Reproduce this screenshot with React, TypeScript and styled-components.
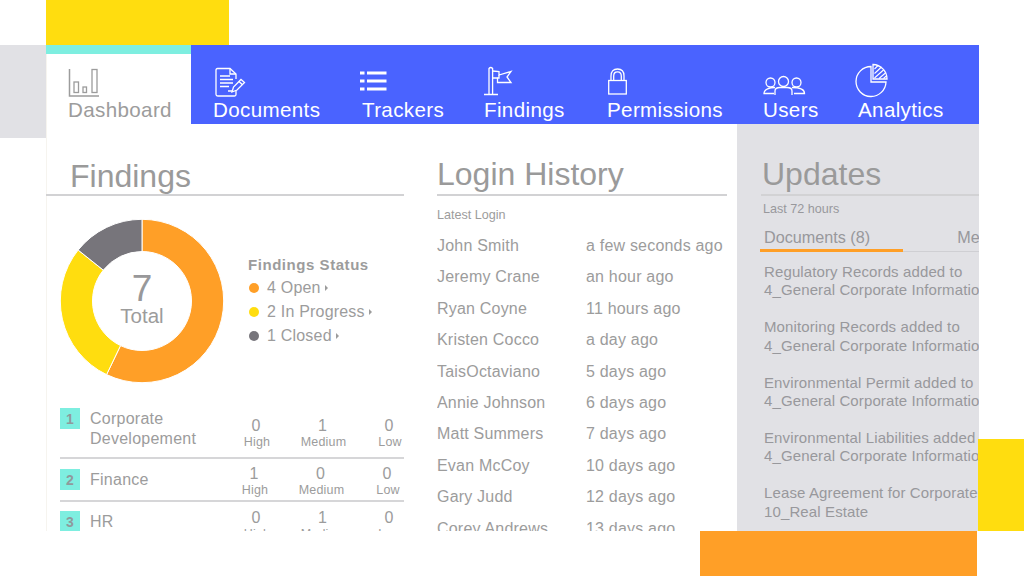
import React from "react";
import styled, { createGlobalStyle } from "styled-components";

const Global = createGlobalStyle`
  html, body { margin: 0; padding: 0; background: #fff; }
  body { font-family: "Liberation Sans", Arial, sans-serif; color: #9c9c9c; overflow: hidden; }
`;

const Page = styled.div`
  width: 1024px; height: 576px; overflow: hidden;
  display: grid; grid-template-columns: 46px 933px 45px; grid-template-rows: 45px 486px 45px;
`;
const TopBlock = styled.div`grid-column: 2; grid-row: 1; width: 183px; background: #ffdd0f;`;
const LeftBlock = styled.div`grid-column: 1; grid-row: 2; height: 93px; background: #e1e1e5;`;
const RightBlock = styled.div`grid-column: 3; grid-row: 2; align-self: end; height: 92px; margin-left: -1px; background: #ffdd0f;`;
const BottomBlock = styled.div`grid-column: 2; grid-row: 3; justify-self: end; width: 277px; margin-right: 2px; background: #ff9f27;`;

const Card = styled.div`
  grid-column: 2; grid-row: 2; display: flex; flex-direction: column; overflow: hidden;
  box-shadow: inset 1px 0 0 #f6f4ef;
`;
const Nav = styled.nav`display: flex; height: 79px; flex: none;`;
const HomeTab = styled.div`
  width: 145px; box-sizing: border-box; border-top: 9px solid #7eeee0; padding: 12px 0 0 22px;
  color: #9c9c9c;
`;
const NavStrip = styled.div`
  flex: 1; background: #4a63ff; color: #fff; display: flex; padding: 21px 0 0 22px;
`;
const Tab = styled.div<{ $w: number }>`display: flex; flex-direction: column; width: ${(p) => p.$w}px; flex: none;`;
const TabIcon = styled.svg<{ $shift?: number }>`
  display: block; height: 32px; margin-left: ${(p) => p.$shift ?? 0}px; flex: none; overflow: visible;
  fill: none; stroke: currentColor; stroke-width: 1.3;
`;
const TabLabel = styled.span`font-size: 20.6px; line-height: 24px; letter-spacing: 0.35px; white-space: nowrap;`;

const Panels = styled.div`flex: 1; min-height: 0; display: grid; grid-template-columns: 391px 300px 242px;`;
const Panel = styled.section<{ $grey?: boolean }>`
  min-width: 0; overflow: hidden; background: ${(p) => (p.$grey ? "#e1e1e5" : "transparent")};
  color: ${(p) => (p.$grey ? "#98989c" : "#9c9c9c")};
`;
const FindingsPanel = styled(Panel)`padding-right: 33px;`;
const LoginPanel = styled(Panel)`padding-right: 10px;`;
const UpdatesPanel = styled(Panel)`padding-left: 24px;`;

const Title = styled.h2<{ $inset?: number; $top?: number }>`
  margin: 0; height: 72px; box-sizing: border-box; border-bottom: 2px solid #d2d2d4;
  padding: ${(p) => p.$top ?? 32}px 0 0 ${(p) => p.$inset ?? 0}px;
  font-size: 32px; line-height: 38px; font-weight: 400; color: #9a9a9a;
`;

const Summary = styled.div`display: flex; align-items: center; padding: 23px 0 0 14px;`;
const DonutWrap = styled.div`position: relative; width: 164px; height: 164px; flex: none;`;
const DonutCenter = styled.div`
  position: absolute; inset: 0; display: flex; flex-direction: column; align-items: center; justify-content: center;
  padding-bottom: 3px; box-sizing: border-box;
`;
const CenterNum = styled.span`font-size: 37px; line-height: 33px; color: #98989a;`;
const CenterLabel = styled.span`font-size: 20.5px; line-height: 22px;`;
const Legend = styled.div`margin: -2px 0 0 24px;`;
const LegendTitle = styled.div`font-size: 15px; font-weight: 700; line-height: 24px; letter-spacing: 0.55px;`;
const LegendRow = styled.div`display: flex; align-items: center; height: 23.6px; font-size: 16px; letter-spacing: 0.2px; white-space: nowrap;`;
const Dot = styled.i<{ $c: string }>`width: 10px; height: 10px; border-radius: 50%; background: ${(p) => p.$c}; margin: 0 8px 0 1px;`;
const Caret = styled.i`
  width: 0; height: 0; margin-left: 4px; border-left: 3px solid #9c9c9c;
  border-top: 3px solid transparent; border-bottom: 3px solid transparent;
`;

const DeptList = styled.div`margin-top: 25px;`;
const Dept = styled.div<{ $h: number; $rule?: boolean }>`
  margin-left: 14px; height: ${(p) => p.$h}px; box-sizing: border-box; display: flex;
  border-bottom: ${(p) => (p.$rule ? "2px solid #d6d6d8" : "none")};
`;
const Badge = styled.span<{ $top: number }>`
  width: 20px; height: 21px; background: #7eeee0; color: #8f9a9c; font-size: 14px; font-weight: 700;
  margin-top: ${(p) => p.$top}px;
  display: flex; align-items: center; justify-content: center; flex: none;
`;
const DeptName = styled.div<{ $top: number }>`
  margin-left: 10px; padding-top: ${(p) => p.$top}px; font-size: 16px; line-height: 20px; letter-spacing: 0.25px; flex: 1; white-space: nowrap;
`;
const Metrics = styled.div<{ $shift: number; $top: number }>`
  display: flex; gap: 16.5px; margin-right: ${(p) => p.$shift}px; padding-top: ${(p) => p.$top}px;
`;
const Metric = styled.div`width: 50px; text-align: center;`;
const MetricValue = styled.div`font-size: 16px; line-height: 19px; letter-spacing: 0.2px;`;
const MetricLabel = styled.div`font-size: 12.5px; line-height: 14px; letter-spacing: 0.2px; margin-left: 2px;`;

const Small = styled.div<{ $top: number; $left?: number }>`
  font-size: 12.6px; line-height: 16px; padding: ${(p) => p.$top}px 0 0 ${(p) => p.$left ?? 0}px;
`;
const People = styled.div`padding-top: 7px;`;
const Person = styled.div`display: grid; grid-template-columns: 149px 1fr; height: 31.4px; line-height: 31.4px; font-size: 16px; letter-spacing: 0.2px; white-space: nowrap;`;

const UpdateTabs = styled.div`
  display: flex; gap: 87px; margin-top: 9px; height: 26px; position: relative; box-sizing: border-box;
  border-bottom: 1px solid #cfcfd3; font-size: 16.2px; line-height: 22px; padding-left: 3px; white-space: nowrap;
`;
const ActiveLine = styled.i`
  position: absolute; left: -1px; bottom: -1px; width: 143px; height: 3px; background: #ff9f27;
`;
const UpdateList = styled.div`padding: 11px 0 0 3px;`;
const Update = styled.div`
  height: 55.3px; font-size: 15px; line-height: 18.4px; letter-spacing: 0.12px; white-space: nowrap;
`;

function polar(r: number, deg: number) {
  const a = ((deg - 90) * Math.PI) / 180;
  return `${(82 + r * Math.cos(a)).toFixed(2)} ${(82 + r * Math.sin(a)).toFixed(2)}`;
}
function wedge(a: number, b: number) {
  const large = b - a > 180 ? 1 : 0;
  return `M${polar(81.7, a)}A81.7 81.7 0 ${large} 1 ${polar(81.7, b)}L${polar(49.5, b)}A49.5 49.5 0 ${large} 0 ${polar(49.5, a)}Z`;
}

const people: [string, string][] = [
  ["John Smith", "a few seconds ago"], ["Jeremy Crane", "an hour ago"], ["Ryan Coyne", "11 hours ago"],
  ["Kristen Cocco", "a day ago"], ["TaisOctaviano", "5 days ago"], ["Annie Johnson", "6 days ago"],
  ["Matt Summers", "7 days ago"], ["Evan McCoy", "10 days ago"], ["Gary Judd", "12 days ago"],
  ["Corey Andrews", "13 days ago"],
];
const updates: [string, string][] = [
  ["Regulatory Records added to", "4_General Corporate Information"],
  ["Monitoring Records added to", "4_General Corporate Information"],
  ["Environmental Permit added to", "4_General Corporate Information"],
  ["Environmental Liabilities added to", "4_General Corporate Information"],
  ["Lease Agreement for Corporate Office", "10_Real Estate"],
];

const MetricSet = ({ v, shift, top }: { v: number[]; shift: number; top: number }) => (
  <Metrics $shift={shift} $top={top}>
    {["High", "Medium", "Low"].map((l, i) => (
      <Metric key={l}>
        <MetricValue>{v[i]}</MetricValue>
        <MetricLabel>{l}</MetricLabel>
      </Metric>
    ))}
  </Metrics>
);

export default function App() {
  return (
    <Page>
      <Global />
      <TopBlock />
      <LeftBlock />
      <Card>
        <Nav>
          <HomeTab>
            <TabIcon width="32" viewBox="0 0 32 32">
              <path d="M1.5 3V30H31" strokeWidth="1.5" />
              <rect x="6" y="16" width="4.5" height="10.5" />
              <rect x="15" y="21" width="3.5" height="5.5" />
              <rect x="24" y="3.5" width="5" height="23" />
            </TabIcon>
            <TabLabel>Dashboard</TabLabel>
          </HomeTab>
          <NavStrip>
            <Tab $w={149}>
              <TabIcon width="32" viewBox="0 0 32 32" $shift={2}>
                <path d="M21 23V28.5Q21 30 19.5 30H3Q1 30 1 28V4Q1 2.5 2.5 2.5H15L21 8V13" />
                <path d="M15 2.5V8H21" />
                <path d="M5 10H15M5 13.5H18M5 17H18M5 20.5H14M13 25H18" />
                <path d="M17 26L18.5 21L26 13.5L29.5 16.5L22 24Z" fill="#4a63ff" />
                <path d="M24 15.5L27.5 18.8" />
              </TabIcon>
              <TabLabel>Documents</TabLabel>
            </Tab>
            <Tab $w={122}>
              <TabIcon width="30" viewBox="0 0 30 32" $shift={-2}>
                <path d="M0 7H4.5M7 7H26.5M0 15H4.5M7 15H26.5M0 23H4.5M7 23H26.5" strokeWidth="3" />
              </TabIcon>
              <TabLabel>Trackers</TabLabel>
            </Tab>
            <Tab $w={123}>
              <TabIcon width="30" viewBox="0 0 30 32">
                <path d="M5 28V2.5Q6.8 .5 8.6 2.5V28M0 28.5H14" />
                <path d="M8.6 5L15 5.5V9L27 5.5L23 11L27 16.5H13.5V12H8.6" />
                <path d="M15 9V12H13.5" />
              </TabIcon>
              <TabLabel>Findings</TabLabel>
            </Tab>
            <Tab $w={156}>
              <TabIcon width="24" viewBox="0 0 24 32" $shift={1}>
                <rect x=".7" y="14.5" width="17.6" height="13.5" />
                <path d="M3 14.5V10C3 5.5 5.5 3 9.5 3S16 5.5 16 10V14.5M5.7 14.5V10C5.7 7 7 5.8 9.5 5.8S13.3 7 13.3 10V14.5" />
              </TabIcon>
              <TabLabel>Permissions</TabLabel>
            </Tab>
            <Tab $w={95}>
              <TabIcon width="44" viewBox="0 0 44 32">
                <circle cx="7.5" cy="16.5" r="4.5" />
                <circle cx="20.5" cy="15.5" r="5" />
                <circle cx="33.5" cy="16.5" r="4.5" />
                <path d="M12 21.5C7 21.5 1 23 1 27.5H11" />
                <path d="M29 21.5C36 21.5 41.5 23 41.5 27.5H31" />
                <path d="M12 29V25Q12 21.5 17 21.5H24Q29 21.5 29 25V29" />
              </TabIcon>
              <TabLabel>Users</TabLabel>
            </Tab>
            <Tab $w={100}>
              <TabIcon width="36" viewBox="0 0 36 32" $shift={-2}>
                <path d="M15 .5A15 15 0 1 0 30 16H15Z" />
                <path d="M17 -1.5A14.5 14.5 0 0 1 31 13H17Z" />
                <path d="M18.5 3L22 -.5M18.5 7.5L25.5 1M18.5 12L28 3.5M23 12.5L30 6.5M27.5 12.5L30.8 9.5" strokeWidth="1.1" />
              </TabIcon>
              <TabLabel>Analytics</TabLabel>
            </Tab>
          </NavStrip>
        </Nav>
        <Panels>
          <FindingsPanel>
            <Title $inset={24} $top={33}>Findings</Title>
            <Summary>
              <DonutWrap>
                <svg width="164" height="164" viewBox="0 0 164 164" stroke="#fff" strokeWidth="1">
                  <path d={wedge(0, 205.7)} fill="#ff9f27" />
                  <path d={wedge(205.7, 308.6)} fill="#ffdd0f" />
                  <path d={wedge(308.6, 360)} fill="#77757b" />
                </svg>
                <DonutCenter>
                  <CenterNum>7</CenterNum>
                  <CenterLabel>Total</CenterLabel>
                </DonutCenter>
              </DonutWrap>
              <Legend>
                <LegendTitle>Findings Status</LegendTitle>
                <LegendRow><Dot $c="#ff9f27" />4 Open<Caret /></LegendRow>
                <LegendRow><Dot $c="#ffdd0f" />2 In Progress<Caret /></LegendRow>
                <LegendRow><Dot $c="#77757b" />1 Closed<Caret /></LegendRow>
              </Legend>
            </Summary>
            <DeptList>
              <Dept $h={51} $rule>
                <Badge $top={0}>1</Badge>
                <DeptName $top={1}>Corporate<br />Developement</DeptName>
                <MetricSet v={[0, 1, 0]} shift={-10} top={8} />
              </Dept>
              <Dept $h={43} $rule>
                <Badge $top={10}>2</Badge>
                <DeptName $top={11}>Finance</DeptName>
                <MetricSet v={[1, 0, 0]} shift={-8} top={5} />
              </Dept>
              <Dept $h={40}>
                <Badge $top={9}>3</Badge>
                <DeptName $top={10}>HR</DeptName>
                <MetricSet v={[0, 1, 0]} shift={-10} top={6} />
              </Dept>
            </DeptList>
          </FindingsPanel>
          <LoginPanel>
            <Title $top={31}>Login History</Title>
            <Small $top={11}>Latest Login</Small>
            <People>
              {people.map(([n, t]) => (
                <Person key={n}><span>{n}</span><span>{t}</span></Person>
              ))}
            </People>
          </LoginPanel>
          <UpdatesPanel $grey>
            <Title $inset={1} $top={31}>Updates</Title>
            <Small $top={5} $left={2}>Last 72 hours</Small>
            <UpdateTabs>
              <span>Documents (8)</span>
              <span>Me</span>
              <ActiveLine />
            </UpdateTabs>
            <UpdateList>
              {updates.map(([a, b]) => (
                <Update key={a}>{a}<br />{b}</Update>
              ))}
            </UpdateList>
          </UpdatesPanel>
        </Panels>
      </Card>
      <RightBlock />
      <BottomBlock />
    </Page>
  );
}
